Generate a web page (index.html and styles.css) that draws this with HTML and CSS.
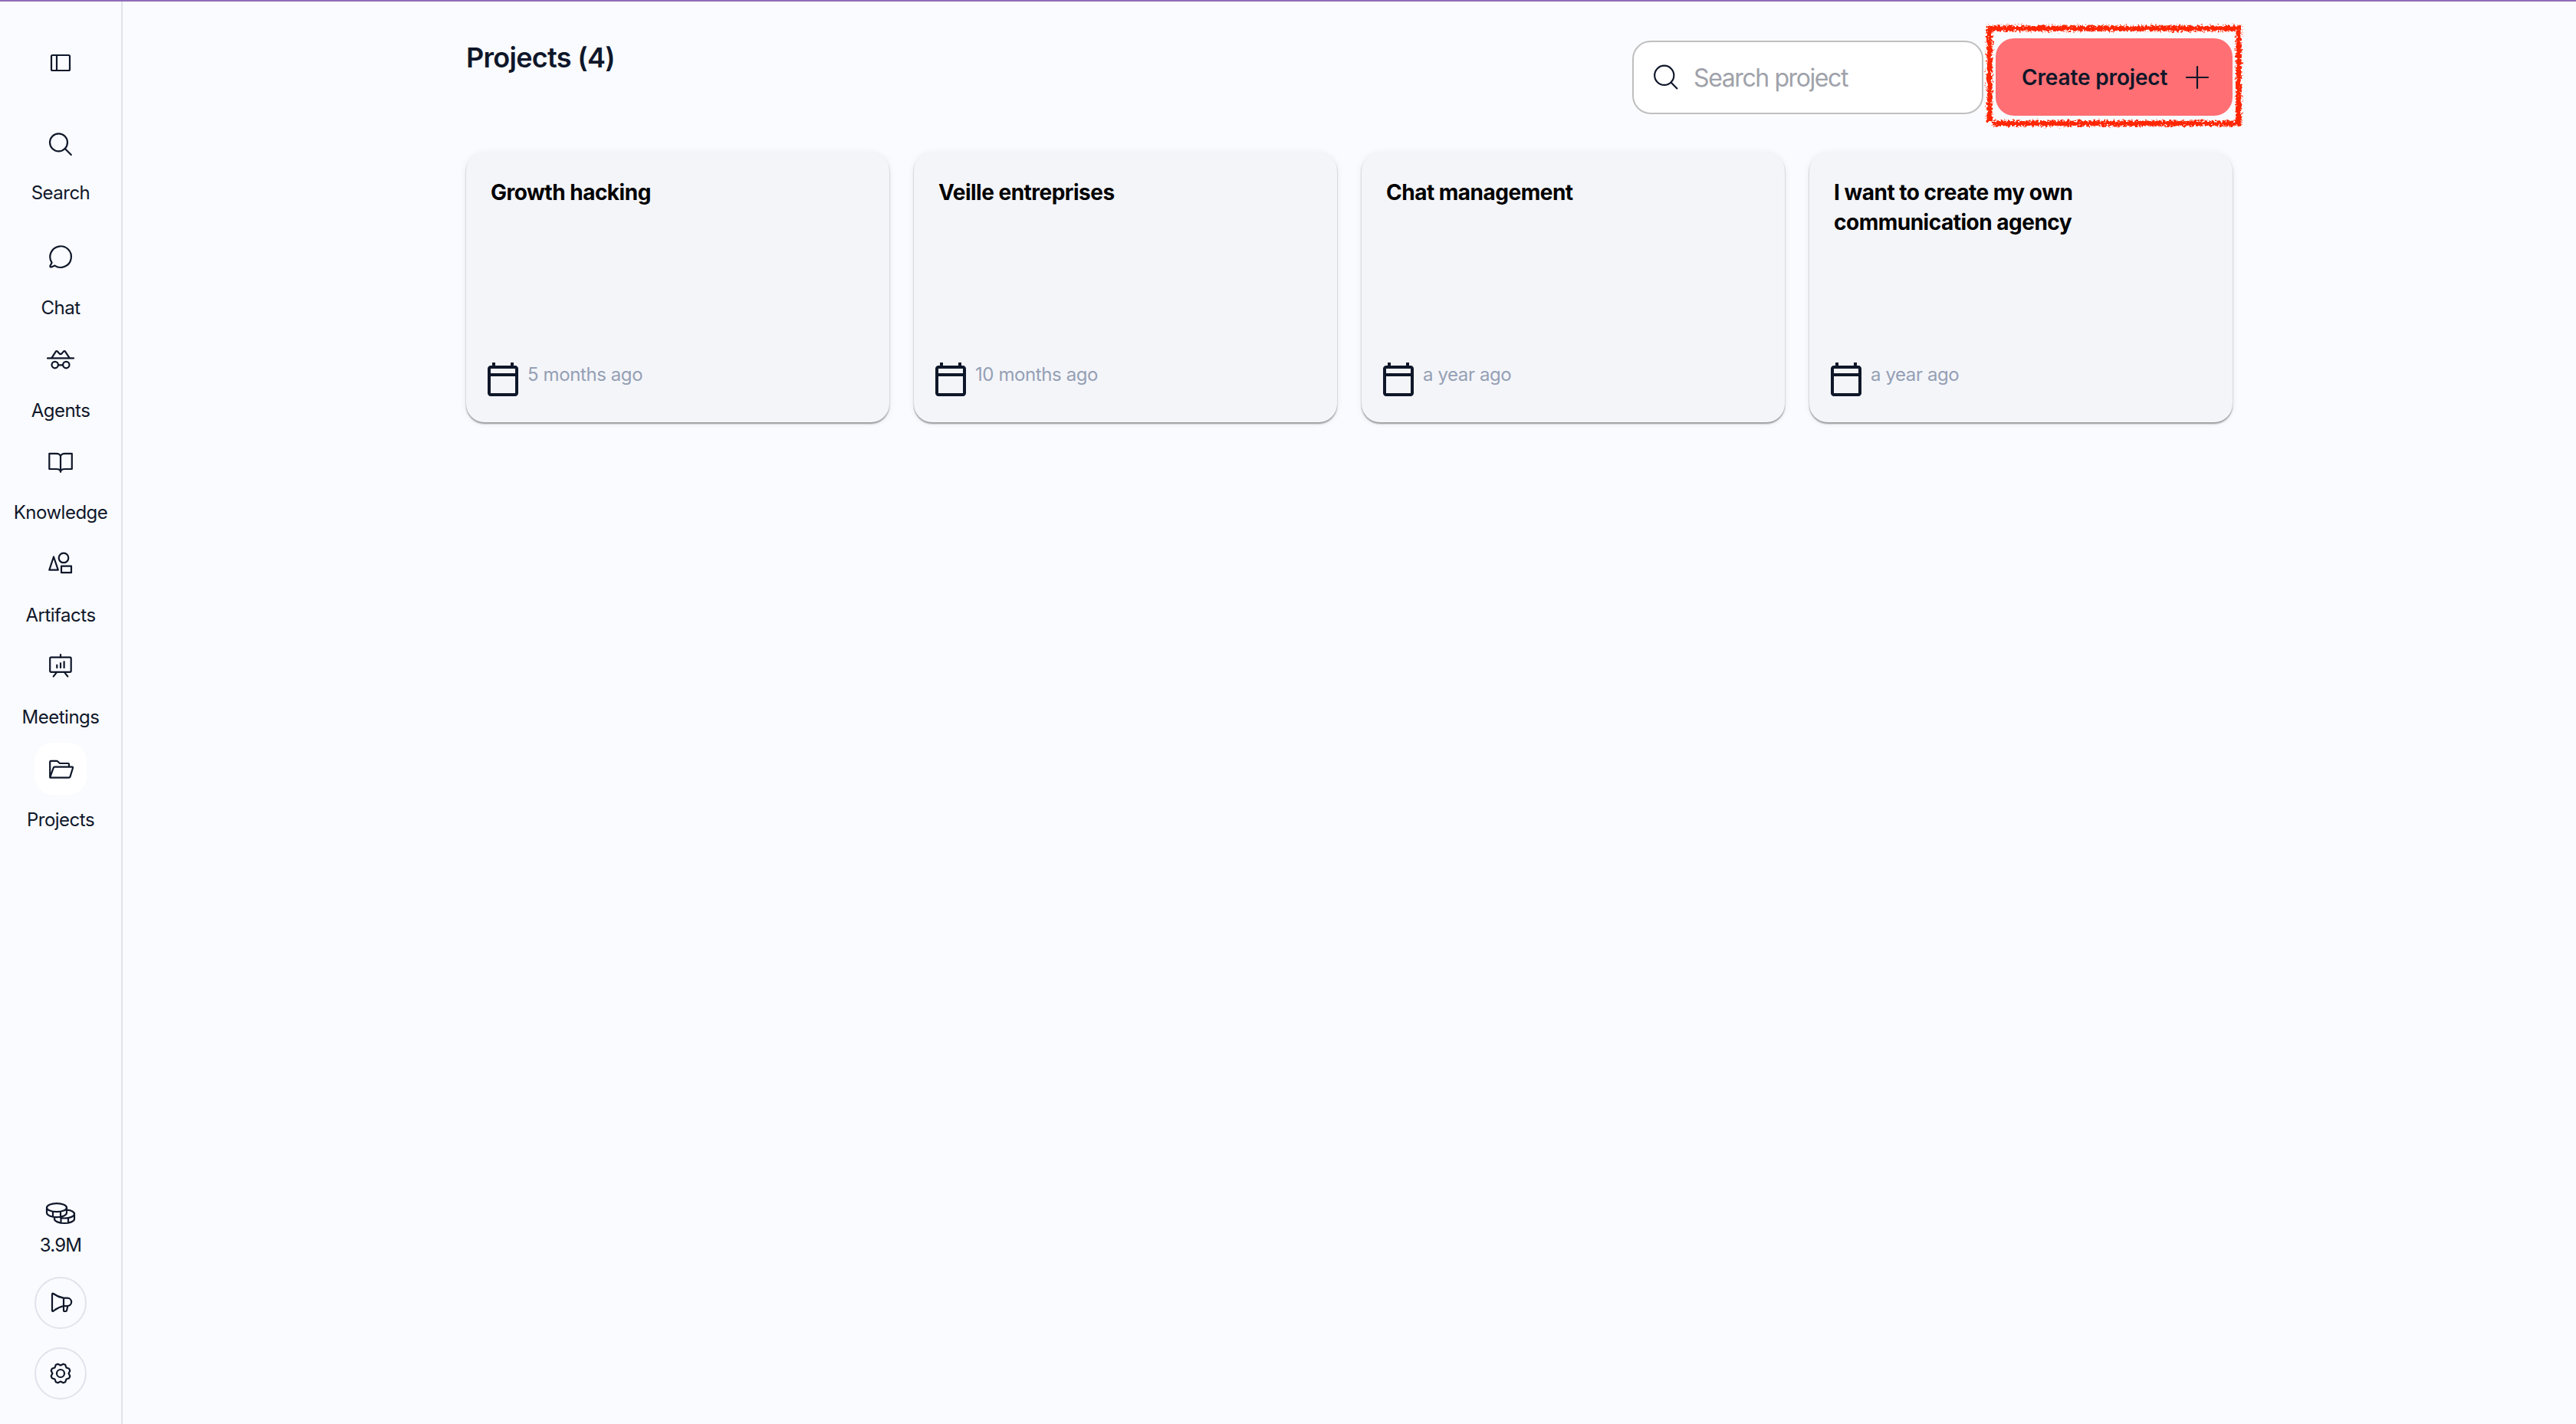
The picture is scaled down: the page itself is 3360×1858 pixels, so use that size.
FILE: index.html
```html
<!DOCTYPE html>
<html lang="en">
<head>
    <meta charset="UTF-8">
    <meta name="viewport" content="width=device-width, initial-scale=1.0">
    <title>Projects</title>
    <link rel="stylesheet" href="styles.css">
</head>
<body>
    <aside class="sidebar">
        <button class="icon-box toggle" aria-label="Toggle sidebar">
            <svg class="icon" viewBox="0 0 40 40"><rect x="8" y="10" width="24" height="20" rx="1.5"/><path d="M15 10v20"/></svg>
        </button>

        <nav class="menu">
            <a class="menu-item search-item">
                <span class="icon-box"><svg class="icon" viewBox="0 0 40 40"><circle cx="17.5" cy="17.8" r="11.5"/><path d="M25.8 26l8 8"/></svg></span>
                <span class="label">Search</span>
            </a>
            <a class="menu-item">
                <span class="icon-box"><svg class="icon" viewBox="0 0 40 40"><path d="M8.6 27.7A13.8 13.8 0 1 1 12.5 31.6L8 33.4q-1.9.3-1.6-1.5z"/></svg></span>
                <span class="label">Chat</span>
            </a>
            <a class="menu-item">
                <span class="icon-box"><svg class="icon" viewBox="0 0.6 40 40"><path d="M3 19h34M8.5 18.5l5.2-8.1q1-1.5 2.3-.2l2.5 2.8q1.5 1.2 3 0l2.4-2.8q1.3-1.3 2.3.2l5.3 8.1"/><circle cx="12.7" cy="27.7" r="4.2"/><circle cx="27.3" cy="27.7" r="4.2"/><path d="M17 28h6"/></svg></span>
                <span class="label">Agents</span>
            </a>
            <a class="menu-item">
                <span class="icon-box"><svg class="icon" viewBox="0 -1.8 40 40"><path d="M20 12c0-2.5-2.5-4-5.5-4H5.3v20.2h9.2c3 0 5.5 1.3 5.5 3.8V12c0-2.5 2.5-4 5.5-4h9.3v20.2h-9.3c-3 0-5.5 1.3-5.5 3.8"/></svg></span>
                <span class="label">Knowledge</span>
            </a>
            <a class="menu-item">
                <span class="icon-box"><svg class="icon" viewBox="0 1.8 40 40"><path d="M5.3 29.5L11 12.3l5.8 17.2z"/><circle cx="24" cy="13.7" r="6.3"/><rect x="21" y="24.5" width="13" height="8.5"/></svg></span>
                <span class="label">Artifacts</span>
            </a>
            <a class="menu-item">
                <span class="icon-box"><svg class="icon" viewBox="0 0.4 40 40"><rect x="6.2" y="9" width="27.5" height="19.2" rx="1.5"/><path d="M20 5.5V9M15 28.5l-4.3 5.5M25 28.5l4.300 5.500M15.300 19.200v3.400M20 16.700v5.900M24.600 14.700v7.900"/></svg></span>
                <span class="label">Meetings</span>
            </a>
            <a class="menu-item active">
                <span class="icon-box"><svg class="icon" viewBox="0 0 40 40"><path d="M6.2 31.5V11q0-1.2 1.2-1.2h7.4q.6 0 1 .4l3.300 2.800h10.700q1.200 0 1.200 1.200v3.300M6.200 31.500l4.500-12.700q.4-1.100 1.500-1.100h22.900q1.300 0 .9 1.300l-3.500 11.400q-.4 1.300-1.600 1.300H6.800"/></svg></span>
                <span class="label">Projects</span>
            </a>
        </nav>

        <div class="sidebar-footer">
            <svg class="icon" viewBox="0 0 40 40"><ellipse cx="15" cy="12.7" rx="13" ry="5.5"/><path d="M2 12.7v6.600c0 3.300 5.800 5.900 13 5.900s13-2.600 13-5.900v-6.600M10 18.200v6.300M20 18v6.300M28.500 15.600c5.600.5 9.500 2.800 9.500 5.400 0 3-5.800 5.500-13 5.500-1.700 0-3.300-.1-4.800-.4M12 25.500v2c0 3 5.800 5.500 13 5.500s13-2.500 13-5.500V21M20.500 26.500v6M30 26v6.500"/></svg>
            <span class="credits">3.9M</span>
            <button class="icon-box round" aria-label="News">
                <svg class="icon" viewBox="0 0 40 40"><path d="M24 13.700C18 12.500 14.500 10.800 10.700 8 9.700 7.400 9 7.800 9 8.800v21c0 1 .7 1.400 1.700.7 3.800-3 7.300-5.200 13.300-6.500zM24 13.700h5a5.100 5.100 0 0 1 0 10.300h-5v5.500q0 1.500 1.300 1.500h1.200q1.300 0 1.600-1.300l1.200-5.700"/></svg>
            </button>
            <button class="icon-box round" aria-label="Settings">
                <svg class="icon" viewBox="0 0 40 40"><circle cx="20" cy="20" r="5"/><path d="M20 9.400L23.500 7.700 26.200 8.800 27.500 12.500 31.200 13.800 32.300 16.500 30.600 20 32.300 23.500 31.200 26.200 27.500 27.500 26.200 31.200 23.500 32.300 20 30.600 16.500 32.300 13.800 31.200 12.500 27.500 8.800 26.200 7.700 23.500 9.400 20 7.700 16.500 8.800 13.800 12.500 12.500 13.800 8.800 16.500 7.700z"/></svg>
            </button>
        </div>
    </aside>

    <main class="content">
        <header class="header">
            <h1>Projects (4)</h1>
            <div class="actions">
                <label class="search-box">
                    <svg class="icon" viewBox="0 0 40 40"><circle cx="17.500" cy="17" r="14"/><path d="M27.500 27.500l8.500 8.500"/></svg>
                    <input type="text" placeholder="Search project">
                </label>
                <div class="create">
                    <button class="create-btn">
                        <span>Create project</span>
                        <svg class="icon" viewBox="0 0 32 32"><path d="M16 2v28M2 16h28"/></svg>
                    </button>
                    <!-- hand-drawn highlight around the button -->
                    <svg class="highlight" viewBox="0 0 345 143">
                        <filter id="crayon" x="-5%" y="-5%" width="110%" height="110%">
                            <feTurbulence type="fractalNoise" baseFrequency="0.35" numOctaves="3" seed="4" result="noise"/>
                            <feDisplacementMap in="SourceGraphic" in2="noise" scale="9" xChannelSelector="R" yChannelSelector="G"/>
                        </filter>
                        <path filter="url(#crayon)" d="M10 132V10H335V134H14"/>
                    </svg>
                </div>
            </div>
        </header>

        <section class="cards">
            <article class="card">
                <h2>Growth hacking</h2>
                <div class="date"><svg viewBox="0 0 24 24"><use href="#calendar"/></svg><span>5 months ago</span></div>
            </article>
            <article class="card">
                <h2>Veille entreprises</h2>
                <div class="date"><svg viewBox="0 0 24 24"><use href="#calendar"/></svg><span>10 months ago</span></div>
            </article>
            <article class="card">
                <h2>Chat management</h2>
                <div class="date"><svg viewBox="0 0 24 24"><use href="#calendar"/></svg><span>a year ago</span></div>
            </article>
            <article class="card">
                <h2>I want to create my own communication agency</h2>
                <div class="date"><svg viewBox="0 0 24 24"><use href="#calendar"/></svg><span>a year ago</span></div>
            </article>
        </section>
    </main>

    <svg class="symbols">
        <symbol id="calendar" viewBox="0 0 24 24">
            <path d="M20 3h-1V1h-2v2H7V1H5v2H4c-1.100 0-2 .9-2 2v16c0 1.100.9 2 2 2h16c1.100 0 2-.9 2-2V5c0-1.100-.9-2-2-2zm0 18H4V10h16v11zm0-13H4V5h16v3z"/>
        </symbol>
    </svg>
</body>
</html>
```
FILE: styles.css
```css
* {
    box-sizing: border-box;
}

body {
    display: flex;
    height: 1858px;
    margin: 0;
    border-top: 2px solid #8f6bb8;
    background-color: #fafbfe;
    color: #0f172a;
    font-family: Inter, "Liberation Sans", sans-serif;
    overflow: hidden;
}

button {
    padding: 0;
    border: none;
    background: none;
    color: inherit;
    font: inherit;
}

h1, h2 {
    margin: 0;
}

.icon {
    display: block;
    flex: none;
    width: 40px;
    height: 40px;
    fill: none;
    stroke: #0f172a;
    stroke-width: 2.2;
    stroke-linecap: round;
    stroke-linejoin: round;
}

.symbols {
    display: none;
}

/* Sidebar */
.sidebar {
    display: flex;
    flex-direction: column;
    align-items: center;
    flex: none;
    width: 160px;
    padding: 46px 0 32px;
    border-right: 2px solid #e1e3ec;
}

.icon-box {
    display: flex;
    align-items: center;
    justify-content: center;
    flex: none;
    width: 68px;
    height: 68px;
    border-radius: 24px;
}

.menu {
    margin-top: 38px;
}

.menu-item {
    display: flex;
    flex-direction: column;
    align-items: center;
    gap: 15px;
    height: 133.6px;
}

.search-item {
    gap: 12px;
    height: 147px;
}

.active .icon-box {
    background-color: #fff;
}

.label,
.credits {
    font-size: 24px;
    letter-spacing: -0.5px;
    line-height: 36px;
}

.sidebar-footer {
    display: flex;
    flex-direction: column;
    align-items: center;
    margin-top: auto;
}

.credits {
    margin: 4px 0 23px;
    letter-spacing: -0.8px;
}

.round {
    border: 2px solid #e1e3ec;
    border-radius: 50%;
}

.round + .round {
    margin-top: 24px;
}

/* Projects */
.content {
    width: 2304px;
    margin-left: 448px;
    padding-top: 48px;
}

.header {
    display: flex;
    justify-content: space-between;
    height: 149px;
}

h1 {
    font-size: 36px;
    font-weight: 600;
    letter-spacing: -0.7px;
    line-height: 51px;
}

.actions {
    display: flex;
    gap: 16px;
}

.search-box {
    display: flex;
    align-items: center;
    width: 458px;
    height: 96px;
    margin-top: 3px;
    padding-left: 24px;
    border: 2px solid #bfbfbf;
    border-radius: 24px;
    background-color: #fff;
}

.search-box .icon {
    width: 36px;
    height: 36px;
    stroke-width: 2.4;
}

.search-box input {
    width: 340px;
    margin-left: 18px;
    padding: 0;
    border: none;
    outline: none;
    background: none;
    font-family: inherit;
    font-size: 32px;
    letter-spacing: -1.4px;
}

.search-box input::placeholder {
    color: #9fa2aa;
}

.create {
    position: relative;
}

.create-btn {
    display: flex;
    align-items: center;
    justify-content: space-between;
    width: 309px;
    height: 101px;
    padding: 0 30px 0 34px;
    border-radius: 24px;
    background-color: #ff6f73;
    font-size: 28px;
    font-weight: 600;
    letter-spacing: -0.15px;
}

.create-btn .icon {
    width: 32px;
    height: 32px;
}

.highlight {
    position: absolute;
    left: -18px;
    top: -23px;
    width: 345px;
    height: 143px;
    fill: none;
    stroke: #ff2600;
    stroke-width: 7;
    pointer-events: none;
}

.cards {
    display: grid;
    grid-template-columns: repeat(4, 552px);
    gap: 32px;
}

.card {
    display: flex;
    flex-direction: column;
    justify-content: space-between;
    height: 352px;
    padding: 33px 24px 32px;
    border-radius: 24px;
    background-color: #f4f5f9;
    box-shadow: 0 2px 2px rgba(0, 0, 0, 0.38), 0 1px 10px rgba(0, 0, 0, 0.07);
}

.card h2 {
    padding: 0 8px;
    color: #000;
    font-size: 28px;
    font-weight: 700;
    letter-spacing: -0.5px;
    line-height: 39px;
}

.date {
    display: flex;
    gap: 8px;
    color: #94a0b5;
    font-size: 24px;
    letter-spacing: -0.4px;
    line-height: 35px;
}

.date svg {
    width: 48px;
    height: 48px;
    fill: #0f172a;
}
```
